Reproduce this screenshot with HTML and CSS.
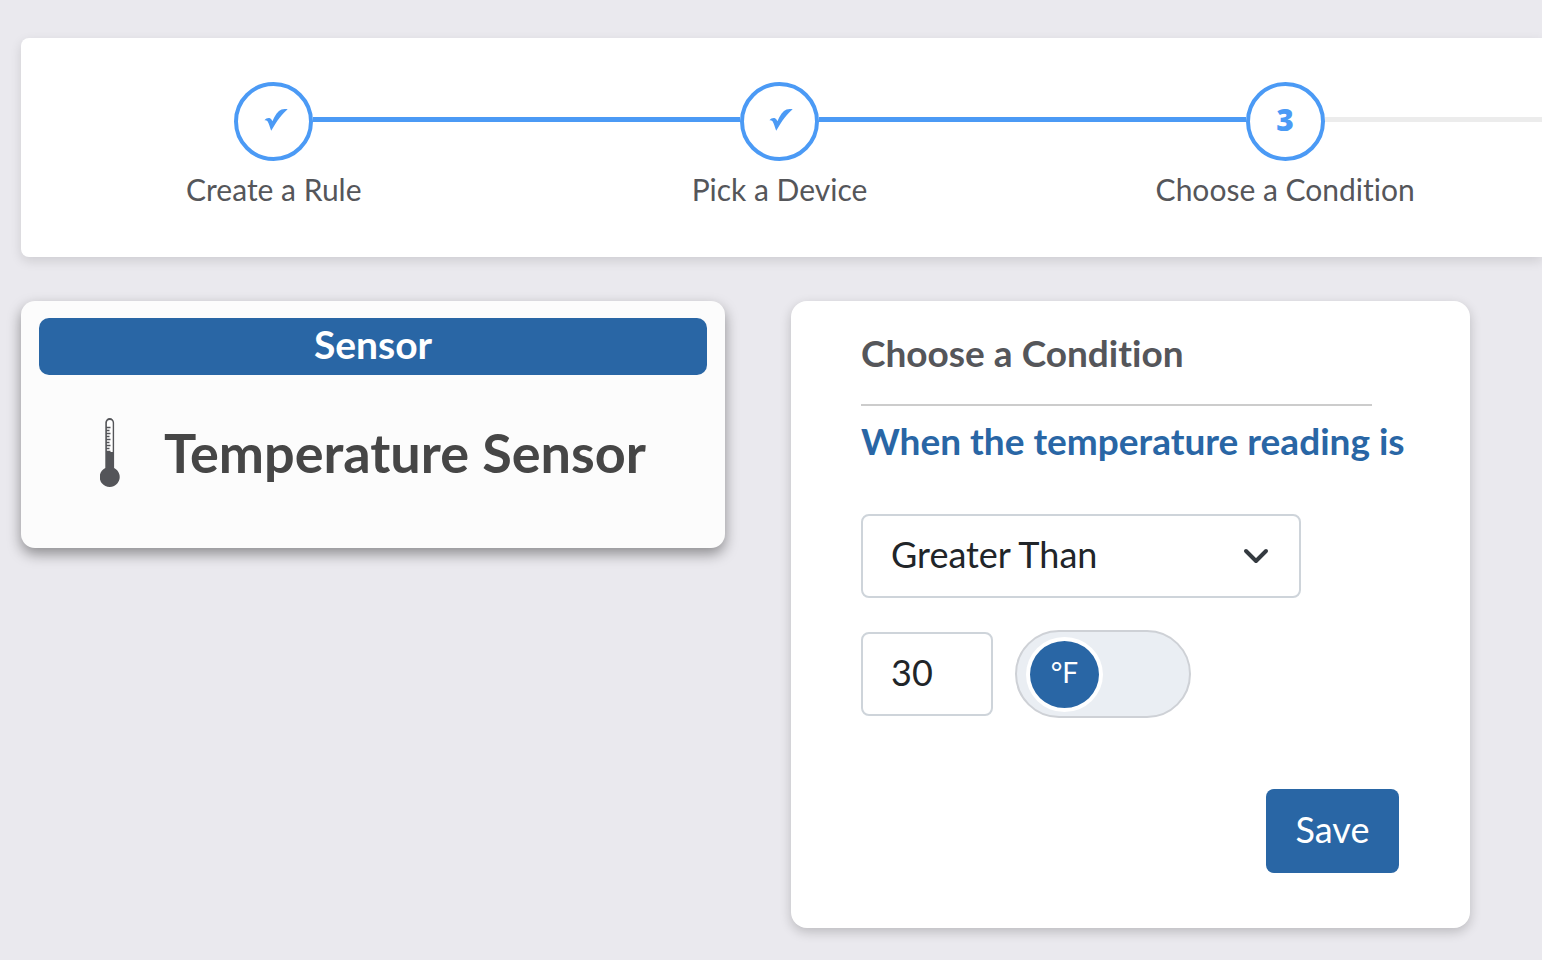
FILE: index.html
```html
<!DOCTYPE html>
<html lang="en">
<head>
<meta charset="utf-8">
<meta name="viewport" content="width=device-width, initial-scale=1">
<title>Choose a Condition</title>
<link rel="stylesheet" href="styles.css">
</head>
<body>
<nav class="panel" aria-label="Progress">
  <ol class="steps">
    <li class="step">
      <span class="track"></span>
      <span class="marker">
        <svg class="check" viewBox="0 0 24 24" aria-hidden="true"><path d="M.5 12.200C2 10.300 4.500 9.600 6.300 10.400C7.400 10.900 8 12 8.400 13.300C11 7 14 3 17.500 1.500C19.500.7 21.500.8 23.700 1.200C18.500 5.500 13 12.500 7.200 22.800C5.800 18.800 4.800 15 3.500 13.200C2.700 12.300 1.700 12 .5 12.200Z"/></svg>
      </span>
      <span class="track track-done"></span>
      <span class="step-label">Create a Rule</span>
    </li>
    <li class="step">
      <span class="track track-done"></span>
      <span class="marker">
        <svg class="check" viewBox="0 0 24 24" aria-hidden="true"><path d="M.5 12.200C2 10.300 4.500 9.600 6.300 10.400C7.400 10.900 8 12 8.400 13.300C11 7 14 3 17.500 1.500C19.500.7 21.500.8 23.700 1.200C18.500 5.500 13 12.500 7.200 22.800C5.800 18.800 4.800 15 3.500 13.200C2.700 12.300 1.700 12 .5 12.200Z"/></svg>
      </span>
      <span class="track track-done"></span>
      <span class="step-label">Pick a Device</span>
    </li>
    <li class="step" aria-current="step">
      <span class="track track-done"></span>
      <span class="marker">3</span>
      <span class="track track-next"></span>
      <span class="step-label">Choose a Condition</span>
    </li>
  </ol>
</nav>

<main class="content">
  <section class="sensor-card">
    <h2 class="sensor-type">Sensor</h2>
    <div class="sensor-body">
      <svg class="thermometer" viewBox="0 0 20 70" aria-hidden="true">
        <path class="solid" d="M5.300 34V4.500A4.400 4.400 0 0 1 14.100 4.500V50A10 10 0 1 1 5.300 50Z"/>
        <path class="tube" d="M6.900 34V5A2.900 3 0 0 1 12.700 5V34Z"/>
        <path class="ticks" d="M6 9.500H10.500M6 12.500H9.500M6 15.500H10.500M6 18.500H9.500M6 21.500H10.500M6 24.500H9.500M6 27.500H10.500M6 30.500H9.500M6 33.500H10.500"/>
      </svg>
      <h3 class="sensor-name">Temperature Sensor</h3>
    </div>
  </section>

  <form class="condition-card">
    <h2 class="title">Choose a Condition</h2>
    <hr class="divider">
    <label class="prompt" for="comparison">When the temperature reading is</label>
    <div class="select-wrap">
      <select class="field" id="comparison">
        <option>Greater Than</option>
        <option>Less Than</option>
      </select>
      <svg class="chevron" viewBox="0 0 26 16" aria-hidden="true"><path d="M3 3L13 13L23 3"/></svg>
    </div>
    <div class="value-row">
      <input class="field value" type="text" inputmode="numeric" value="30" aria-label="Temperature">
      <label class="toggle">
        <input class="toggle-input" type="checkbox" role="switch" aria-label="Use Celsius">
        <span class="knob">°F</span>
      </label>
    </div>
    <button class="save" type="button">Save</button>
  </form>
</main>
</body>
</html>
```

FILE: styles.css
```css
* {
  box-sizing: border-box;
}

body {
  margin: 0;
  padding: 38px 0 32px 21px;
  overflow-x: hidden;
  background: #eae9ee;
  color: #55565a;
  font-family: Lato, "Open Sans", sans-serif;
  font-variant-ligatures: none;
}

h2,
h3 {
  margin: 0;
}

.panel {
  padding: 44px 4px 48px 0;
  background: #fff;
  border-radius: 8px 0 0 8px;
  box-shadow: 0 4px 12px rgba(0, 0, 0, 0.12);
}

.steps {
  display: grid;
  grid-template-columns: repeat(3, 1fr);
  margin: 0;
  padding: 0;
  list-style: none;
}

.step {
  display: grid;
  grid-template-columns: 1fr 79px 1fr;
  align-items: center;
  row-gap: 9px;
}

.track {
  height: 5px;
  margin-bottom: 4px;
}

.track-done {
  background: #4b9af5;
}

.track-next {
  margin-right: -4px;
  background: #ececec;
}

.marker {
  display: flex;
  align-items: center;
  justify-content: center;
  height: 79px;
  padding-bottom: 4px;
  border: 4px solid #4b9af5;
  border-radius: 50%;
  color: #4b9af5;
  font-family: "Open Sans", sans-serif;
  font-size: 30px;
  font-weight: 800;
}

.check {
  width: 24px;
  margin-left: 4px;
  fill: currentColor;
}

.step-label {
  grid-column: 1 / -1;
  font-size: 30px;
  line-height: 39px;
  text-align: center;
}

.content {
  display: grid;
  grid-template-columns: minmax(0, 704fr) minmax(0, 679fr);
  align-items: start;
  gap: 66px;
  padding: 44px 72px 0 0;
}

.sensor-card {
  padding: 17px 18px 42px;
  background: #fcfcfc;
  border-radius: 14px;
  box-shadow: 0 6px 14px rgba(0, 0, 0, 0.4);
}

.sensor-type {
  height: 57px;
  background: #2966a5;
  border-radius: 10px;
  color: #fff;
  font-size: 39px;
  line-height: 52px;
  text-align: center;
}

.sensor-body {
  display: flex;
  align-items: center;
  gap: 44px;
  padding: 24px 0 0 61px;
}

.thermometer {
  flex: none;
  width: 20px;
  height: 70px;
}

.solid {
  fill: #545559;
}

.tube {
  fill: #fff;
}

.ticks {
  fill: none;
  stroke: #545559;
  stroke-width: 1.4;
}

.sensor-name {
  color: #464646;
  font-size: 54px;
  line-height: 107px;
  white-space: nowrap;
}

.condition-card {
  display: flex;
  flex-direction: column;
  align-items: flex-start;
  padding: 28px 71px 55px 70px;
  background: #fff;
  border-radius: 16px;
  box-shadow: 0 4px 12px rgba(0, 0, 0, 0.2);
}

.title {
  font-size: 37px;
  line-height: 48px;
}

.divider {
  width: 95%;
  height: 2px;
  margin: 27px 0 11px;
  border: 0;
  background: #ccc;
}

.prompt {
  color: #2966a5;
  font-size: 37px;
  font-weight: 700;
  line-height: 48px;
  white-space: nowrap;
}

.select-wrap {
  display: grid;
  align-items: center;
  width: 440px;
  max-width: 100%;
  margin-top: 49px;
}

.field {
  height: 84px;
  padding: 0 28px 4px;
  background: #fff;
  border: 2px solid #ced4da;
  border-radius: 8px;
  color: #212529;
  font: 36px Lato, "Open Sans", sans-serif;
}

select.field {
  grid-area: 1 / 1;
  width: 100%;
  appearance: none;
}

.chevron {
  grid-area: 1 / 1;
  justify-self: end;
  width: 26px;
  margin-right: 32px;
  fill: none;
  stroke: #343a40;
  stroke-width: 4;
  stroke-linecap: round;
  stroke-linejoin: round;
  pointer-events: none;
}

.value-row {
  display: flex;
  align-items: center;
  gap: 22px;
  margin-top: 32px;
}

.value {
  width: 132px;
}

.toggle {
  display: flex;
  align-items: center;
  width: 176px;
  height: 88px;
  padding-left: 9px;
  background: #eaeef3;
  border: 2px solid #ced1d6;
  border-radius: 44px;
}

.toggle-input {
  position: absolute;
  opacity: 0;
}

.knob {
  display: flex;
  align-items: center;
  justify-content: center;
  width: 77px;
  height: 75px;
  padding-bottom: 4px;
  background: #2966a5;
  border: 4px solid #fff;
  border-radius: 50%;
  color: #fff;
  font-size: 28px;
}

.save {
  align-self: flex-end;
  width: 133px;
  height: 84px;
  margin-top: 71px;
  padding: 0 0 4px;
  background: #2966a5;
  border: 0;
  border-radius: 8px;
  color: #fff;
  font: 36px Lato, "Open Sans", sans-serif;
}
```
